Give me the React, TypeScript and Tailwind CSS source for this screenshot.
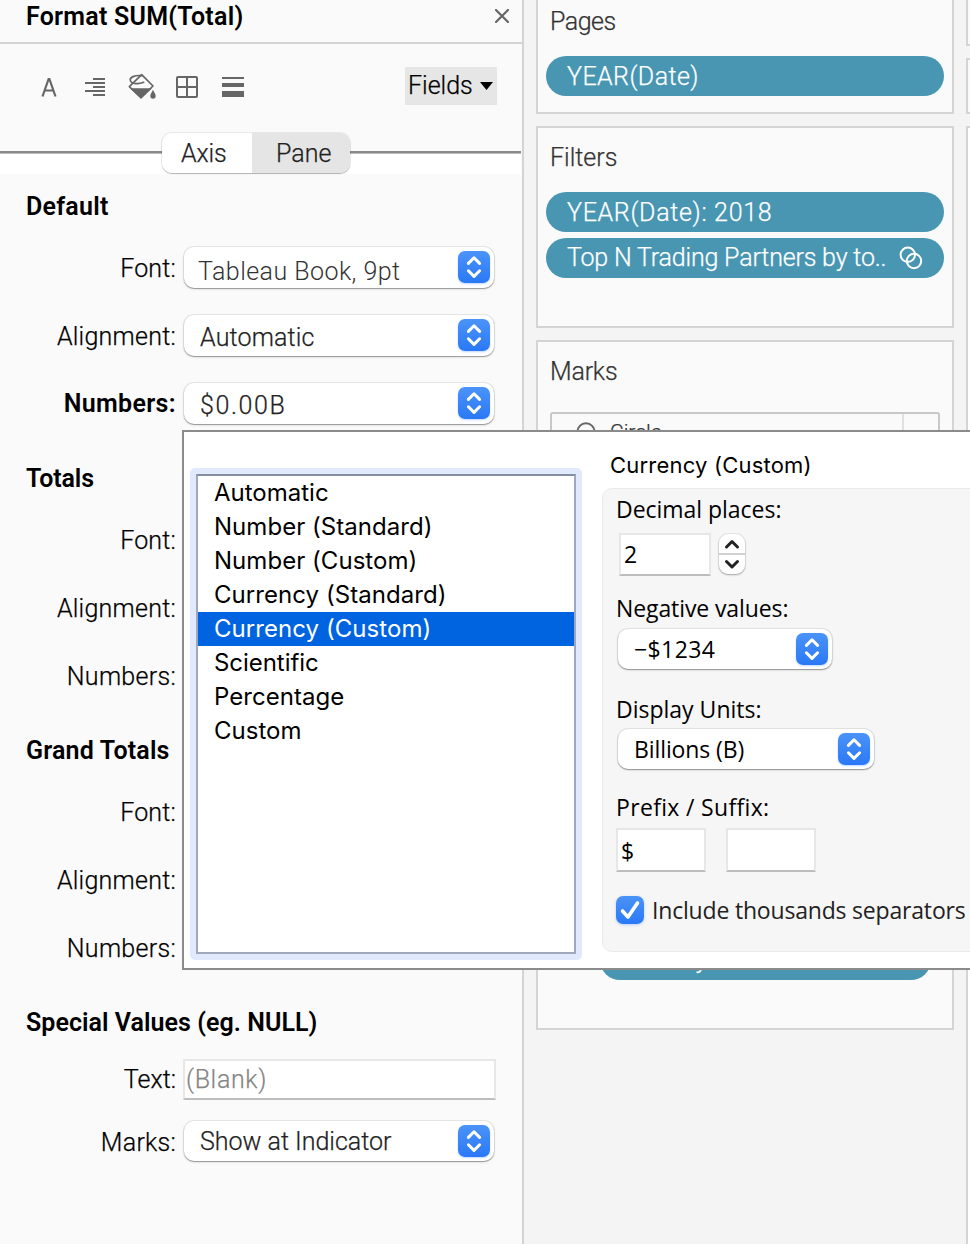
import { clsx } from "clsx";
import type { ReactNode } from "react";

const BOOK = "font-[Roboto,'Liberation_Sans',sans-serif] text-[25px] font-light [-webkit-text-stroke:0.25px]";
const LUCIDA = "font-['Open_Sans','Noto_Sans',sans-serif] text-[23px] font-[480] text-black";

function Stepper() {
  return (
    <span className="flex h-8 w-8 shrink-0 items-center justify-center rounded-[7px] bg-linear-to-b from-[#4a93f8] to-[#2a78f6] shadow-[0_1px_2px_rgba(42,120,246,0.3)]">
      <svg width="32" height="32" viewBox="0 0 32 32" fill="none" stroke="white" strokeWidth="3" strokeLinecap="round" strokeLinejoin="round">
        <path d="M10.400 12.400 16 6.800l5.600 5.600M10.400 19.800l5.600 5.600 5.600-5.600" />
      </svg>
    </span>
  );
}

function Select({ className, children }: { className?: string; children: ReactNode }) {
  return (
    <div
      className={clsx(
        "flex shrink-0 items-center justify-between rounded-[10px] bg-white pr-1 shadow-[0_0_0_1px_rgba(0,0,0,0.07),0_1px_1px_rgba(0,0,0,0.28),0_1px_3px_rgba(0,0,0,0.12)]",
        className,
      )}
    >
      {children}
      <Stepper />
    </div>
  );
}

function Field({ className, children }: { className?: string; children?: ReactNode }) {
  return (
    <div className={clsx("flex shrink-0 items-center border-2 border-[#e7e7e7] border-b-[#bdbdbd] bg-white", className)}>
      {children}
    </div>
  );
}

function Row({ label, labelClass, rowClass = "h-17", children }: { label: string; labelClass?: string; rowClass?: string; children?: ReactNode }) {
  return (
    <div className={clsx("flex items-center", rowClass)}>
      <span className={clsx("w-[184px] shrink-0 pr-2 text-right text-black", labelClass)}>{label}</span>
      {children}
    </div>
  );
}

function Heading({ className, children }: { className?: string; children: ReactNode }) {
  return (
    <h2 className={clsx("flex h-15 items-center pt-1.5 pl-[26px] font-semibold text-black [-webkit-text-stroke:0]", className)}>
      {children}
    </h2>
  );
}

function Toolbar() {
  return (
    <div className="flex h-[85px] shrink-0 items-center pl-[41px] text-[#666]">
      <svg className="mr-7" width="16" height="20" viewBox="0 0 16 20" fill="none" stroke="#666" strokeWidth="2.2">
        <path d="M1.500 19.500 7.600 2h.8L14.500 19.500M3.600 13.500h8.800" />
      </svg>
      <svg className="mr-[23px]" width="20" height="18" viewBox="0 0 20 18" fill="#666">
        <path d="M8 0h12v2H8zM0 4h20v2H0zM8 8h12v2H8zM0 12h20v2H0zM8 16h12v2H8z" />
      </svg>
      <svg className="mr-5 mb-0.5" width="28" height="26" viewBox="0 0 84 78">
        <path d="M41 5 75 39 39 74 4 41Z" fill="none" stroke="#666" strokeWidth="5" strokeLinejoin="round" />
        <path d="M6 46h66L39 77Z" fill="#666" />
        <path d="M42 8C20 6 4 13 7 22c3 12 26 12 40 6" fill="none" stroke="#666" strokeWidth="5" strokeLinecap="round" />
        <path d="M75 50c4 9 8 12 8 19a8 8 0 0 1-16 0c0-7 4-10 8-19Z" fill="#666" />
      </svg>
      <svg className="mr-6" width="22" height="22" viewBox="0 0 22 22" fill="none" stroke="#666" strokeWidth="2">
        <rect x="1" y="1" width="20" height="20" rx="1" />
        <path d="M11 1v20M1 11h20" />
      </svg>
      <svg width="22" height="20" viewBox="0 0 22 20" fill="#666">
        <path d="M0 0h22v2H0zM0 6h22v4H0zM0 14h22v6H0z" />
      </svg>
      <button className="mr-[25px] mb-0.5 ml-auto flex h-[38px] w-[92px] items-center justify-between bg-[#e6e6e6] pr-1 pl-[3px] text-black">
        Fields
        <svg width="13" height="8" viewBox="0 0 13 8" fill="black">
          <path d="M0 0h13L6.5 8z" />
        </svg>
      </button>
    </div>
  );
}

function Pill({ className, children }: { className?: string; children: ReactNode }) {
  return (
    <div className={clsx("flex h-10 items-center rounded-full bg-[#4996b2] pl-[21px] text-white", className)}>{children}</div>
  );
}

function Card({ className, children }: { className?: string; children: ReactNode }) {
  return <section className={clsx("shrink-0 border-2 border-[#d4d4d4] bg-[#fafafa] text-[#333]", className)}>{children}</section>;
}

const FORMATS = [
  ["Automatic", "tracking-normal"],
  ["Number (Standard)", "tracking-[0.04px]"],
  ["Number (Custom)", "tracking-[0.04px]"],
  ["Currency (Standard)", "tracking-[0.06px]"],
  ["Currency (Custom)", "tracking-[0.06px]"],
  ["Scientific", "tracking-[-0.05px]"],
  ["Percentage", "tracking-[0.04px]"],
  ["Custom", "tracking-normal"],
];

function FormatPanel() {
  return (
    <aside className="flex h-full w-[524px] shrink-0 flex-col border-r-2 border-[#d4d4d4] bg-[#fafafa]">
      <header className="flex h-11 shrink-0 items-center justify-between border-b-2 border-[#d4d4d4] pr-[13px] pb-[9px] pl-[26px]">
        <h1 className="font-semibold tracking-[0.24px] text-black [-webkit-text-stroke:0]">Format SUM(Total)</h1>
        <svg className="mb-0.5" width="14" height="14" viewBox="0 0 14 14" stroke="#666" strokeWidth="2.2" strokeLinecap="round">
          <path d="m1 1 12 12M13 1 1 13" />
        </svg>
      </header>
      <Toolbar />
      <div className="flex h-[45px] shrink-0 items-center">
        <div className="mr-px flex h-full w-full flex-col">
          <div className="mt-[22px] h-0.5 bg-[#8b8b8b]" />
          <div className="h-px bg-[#bbb]" />
          <div className="flex-1 bg-white" />
        </div>
        <div className="relative mt-[3px] mr-[172px] -ml-[360px] flex h-10 w-[188px] shrink-0 overflow-hidden rounded-[10px] shadow-[0_0_0_1px_rgba(0,0,0,0.07),0_1px_1px_rgba(0,0,0,0.25)]">
          <span className="flex w-[90px] items-center bg-white pt-0.5 pl-[19px] tracking-[-0.1px] text-[#222]">Axis</span>
          <span className="flex flex-1 items-center bg-[#e5e5e5] pt-0.5 pl-6 text-[#222]">Pane</span>
        </div>
      </div>

      <section className="h-[272px] shrink-0">
        <Heading className="tracking-[0.25px]">Default</Heading>
        <Row label="Font:" labelClass="pt-0.5 tracking-[0.2px]">
          <Select className="mb-0.5 h-[41px] w-[310px]">
            <span className="pt-2.5 pl-[14px] tracking-[0.45px] text-[#333] [-webkit-text-stroke:0]">Tableau Book, 9pt</span>
          </Select>
        </Row>
        <Row label="Alignment:" labelClass="pt-0.5 tracking-[0.25px]">
          <Select className="mb-0.5 h-[41px] w-[310px]">
            <span className="pt-1.5 pl-4 tracking-[0.15px] text-[#222]">Automatic</span>
          </Select>
        </Row>
        <Row label="Numbers:" labelClass="font-semibold tracking-[0.35px] [-webkit-text-stroke:0]">
          <Select className="mb-0.5 h-[41px] w-[310px]">
            <span className="pt-1.5 pl-4 tracking-[1.6px] text-[#222]">$0.00B</span>
          </Select>
        </Row>
      </section>
      <section className="h-[272px] shrink-0">
        <Heading className="tracking-[-0.15px]">Totals</Heading>
        <Row label="Font:" labelClass="pt-0.5 tracking-[0.2px]" />
        <Row label="Alignment:" labelClass="pt-0.5 tracking-[0.25px]" />
        <Row label="Numbers:" labelClass="pt-0.5 tracking-[0.3px]" />
      </section>
      <section className="h-[272px] shrink-0">
        <Heading className="tracking-[0.18px]">Grand Totals</Heading>
        <Row label="Font:" labelClass="pt-0.5 tracking-[0.2px]" />
        <Row label="Alignment:" labelClass="pt-0.5 tracking-[0.25px]" />
        <Row label="Numbers:" labelClass="pt-0.5 tracking-[0.3px]" />
      </section>
      <section className="shrink-0">
        <Heading className="tracking-[0.05px]">Special Values (eg. NULL)</Heading>
        <Row label="Text:" rowClass="h-[58px]" labelClass="pt-0.5 tracking-[0.02px]">
          <Field className="-ml-px h-[41px] w-[313px] pl-px">
            <span className="pt-0.5 tracking-[0.65px] text-[#858585]">(Blank)</span>
          </Field>
        </Row>
        <Row label="Marks:" labelClass="pt-0.5 tracking-[0.25px]">
          <Select className="mb-0.5 h-10 w-[310px]">
            <span className="pt-0.5 pl-4 text-[#222]">Show at Indicator</span>
          </Select>
        </Row>
      </section>
    </aside>
  );
}

function Shelves() {
  return (
    <main className="flex h-full w-[430px] shrink-0 flex-col gap-3 pl-3">
      <Card className="h-[114px] w-[418px] border-t-0 px-2">
        <h3 className="-ml-2 flex h-11 items-center pl-3 tracking-[-0.5px]">Pages</h3>
        <Pill className="mt-3 pt-px tracking-[0.43px]">YEAR(Date)</Pill>
      </Card>
      <Card className="h-[202px] w-[418px] px-2">
        <h3 className="-ml-2 flex h-[60px] items-center pl-3">Filters</h3>
        <Pill className="mt-1 pt-px tracking-[0.68px]">YEAR(Date): 2018</Pill>
        <Pill className="mt-1.5 justify-between pr-[21px] tracking-[-0.18px]">
          <span className="whitespace-nowrap">Top N Trading Partners by to..</span>
          <svg width="24" height="24" viewBox="0 0 24 24" fill="none" stroke="white" strokeWidth="2">
            <circle cx="8.8" cy="8.8" r="7.2" />
            <circle cx="15" cy="15" r="7.2" />
          </svg>
        </Pill>
      </Card>
      <Card className="flex h-[690px] w-[418px] flex-col px-3">
        <h3 className="-ml-3 flex h-[58px] shrink-0 items-center pt-0.5 pl-3 tracking-[-0.2px]">Marks</h3>
        <div className="mt-3 flex h-11 shrink-0 rounded-[3px] border-2 border-[#c8c8c8] text-[21px]">
          <svg className="mt-2 ml-6" width="20" height="20" viewBox="0 0 20 20" fill="none" stroke="#666" strokeWidth="2">
            <circle cx="10" cy="10" r="8.7" />
          </svg>
          <span className="mt-[3px] ml-3.5 text-[#333]">Circle</span>
          <span className="ml-auto w-9 border-l-2 border-[#e0e0e0]" />
        </div>
        <Pill className="mt-auto mr-[9px] mb-12 ml-[50px]">Country</Pill>
      </Card>
    </main>
  );
}

function SheetEdge() {
  return (
    <div className="ml-3 flex h-full w-1 flex-col gap-3">
      <div className="h-[46px] border-b-2 border-l-2 border-[#d4d4d4] bg-[#fafafa]" />
      <div className="h-14 border-y-2 border-l-2 border-[#d4d4d4] bg-[#fafafa]" />
      <div className="flex-1 border-t-2 border-l-2 border-[#d4d4d4] bg-white" />
    </div>
  );
}

function NumberPopup() {
  return (
    <div className="absolute top-[430px] left-[182px] flex h-[540px] w-[788px] overflow-hidden border-2 border-r-0 border-[#8b8b8b] bg-white [-webkit-text-stroke:0]">
      <div className="mt-9 ml-1.5 h-[492px] w-[392px] shrink-0 rounded-[5px] border-6 border-[#e1eafd]">
        <ul className="h-full border-2 border-[#9fa8bd] border-t-[#858da3] bg-white font-[Inter,sans-serif] text-[24px] font-normal text-black">
          {FORMATS.map(([name, tracking]) => (
            <li
              key={name}
              className={clsx("flex h-[34px] items-center pl-4", tracking, name === "Currency (Custom)" && "bg-[#0064e1] text-white")}
            >
              {name}
            </li>
          ))}
        </ul>
      </div>
      <div className="ml-5 flex w-[380px] shrink-0 flex-col">
        <h3 className="flex h-14 items-center pt-2.5 pl-2 font-[Inter,sans-serif] text-[22px] font-normal tracking-[0.2px] text-black">
          Currency (Custom)
        </h3>
        <div className={clsx("flex h-[464px] flex-col rounded-l-[10px] border border-[#eaeaea] bg-[#f6f6f6] pl-[13px] whitespace-nowrap", LUCIDA)}>
          <div className="flex h-10 shrink-0 items-center tracking-[-0.03px]">Decimal places:</div>
          <div className="mt-1 flex h-[43px] shrink-0 items-center gap-2 pl-[3px]">
            <Field className="h-[43px] w-[92px] pl-[3px]">2</Field>
            <div className="mb-0.5 flex h-10 w-[26px] flex-col rounded-[9px] bg-white shadow-[0_0_0_1px_rgba(0,0,0,0.06),0_1px_2px_rgba(0,0,0,0.3)]">
              <svg width="26" height="40" viewBox="0 0 26 40" fill="none" stroke="#222" strokeWidth="3" strokeLinecap="round" strokeLinejoin="round">
                <path d="M0 20h26" stroke="#d0d0d0" strokeWidth="2" strokeLinecap="butt" />
                <path d="m7.500 13 5.500-5.500 5.500 5.500M7.500 27.500 13 33l5.500-5.500" />
              </svg>
            </div>
          </div>
          <div className="mt-3 flex h-[41px] shrink-0 items-center tracking-[-0.1px]">Negative values:</div>
          <Select className="ml-0.5 h-10 w-[214px]">
            <span className="pl-4 tracking-[0.4px]">−$1234</span>
          </Select>
          <div className="mt-5 flex h-10 shrink-0 items-center">Display Units:</div>
          <Select className="ml-0.5 h-10 w-[256px]">
            <span className="pl-4 tracking-[-0.1px]">Billions (B)</span>
          </Select>
          <div className="mt-[17px] flex h-[42px] shrink-0 items-center tracking-[0.33px]">Prefix / Suffix:</div>
          <div className="flex shrink-0 gap-5">
            <Field className="h-11 w-[90px] pt-0.5 pl-[3px]">$</Field>
            <Field className="h-11 w-[90px]" />
          </div>
          <div className="mt-6 flex h-7 shrink-0 items-center gap-2 tracking-[-0.19px] text-[#222]">
            <span className="h-7 w-7 rounded-[7px] bg-linear-to-b from-[#4a93f8] to-[#2a78f6] shadow-[0_1px_3px_rgba(42,120,246,0.3)]">
              <svg width="28" height="28" viewBox="0 0 28 28" fill="none" stroke="white" strokeWidth="3.6" strokeLinecap="round" strokeLinejoin="round">
                <path d="m6.500 15 5.500 6L21.500 7" />
              </svg>
            </span>
            Include thousands separators
          </div>
        </div>
      </div>
    </div>
  );
}

export default function App() {
  return (
    <div className={clsx("relative flex h-[1244px] w-[970px] overflow-hidden bg-[#f4f4f4]", BOOK)}>
      <FormatPanel />
      <Shelves />
      <SheetEdge />
      <NumberPopup />
    </div>
  );
}
